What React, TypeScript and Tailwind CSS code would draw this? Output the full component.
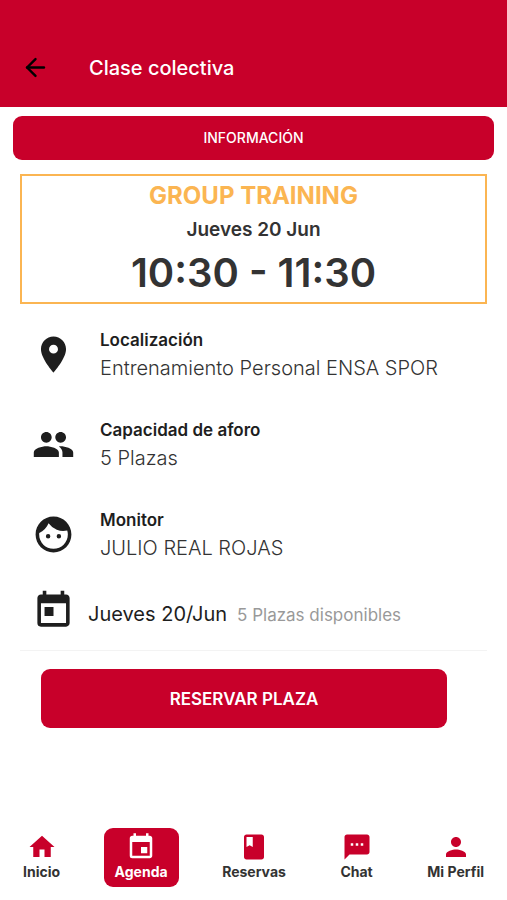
import { useState } from 'react'
import { FiArrowLeft } from 'react-icons/fi'
import {
  MdBook,
  MdEvent,
  MdFace,
  MdHome,
  MdPeople,
  MdPerson,
  MdPlace,
  MdTextsms,
  MdToday,
} from 'react-icons/md'

const DETAILS = [
  { label: 'Localización', value: 'Entrenamiento Personal ENSA SPOR', Icon: MdPlace },
  { label: 'Capacidad de aforo', value: '5 Plazas', Icon: MdPeople },
  { label: 'Monitor', value: 'JULIO REAL ROJAS', Icon: MdFace },
]

const TABS = [
  { label: 'Inicio', Icon: MdHome },
  { label: 'Agenda', Icon: MdEvent },
  { label: 'Reservas', Icon: MdBook },
  { label: 'Chat', Icon: MdTextsms },
  { label: 'Mi Perfil', Icon: MdPerson },
]

function Header() {
  return (
    <header className="flex items-center gap-[39px] bg-[#c8002a] pt-12 pr-5 pb-5 pl-[21px] text-white">
      <button aria-label="Volver" className="flex h-[39px] w-[29px] items-center justify-center text-black">
        <FiArrowLeft size={29} className="shrink-0" />
      </button>
      <h1 className="text-[20px] font-medium">Clase colectiva</h1>
    </header>
  )
}

function ClassCard() {
  return (
    <section className="mx-5 mt-[14px] flex h-[130px] flex-col items-center border-2 border-[#fbb552] pt-1 text-[#333]">
      <h2 className="text-[24px] leading-8 font-bold text-[#fbb552]">GROUP TRAINING</h2>
      <p className="text-[19px] leading-9 font-semibold">Jueves 20 Jun</p>
      <p className="text-[40px] leading-[50px] font-semibold">10:30 - 11:30</p>
    </section>
  )
}

export default function App() {
  const [active, setActive] = useState('Agenda')

  return (
    <div className="flex min-h-screen flex-col bg-white font-[Inter,sans-serif] text-[#1e1e1e]">
      <Header />

      <main>
        <div className="px-[13px] pt-[9px]">
          <button className="h-11 w-full rounded-[9px] bg-[#c8002a] pb-[2px] text-[14px] font-medium text-white">
            INFORMACIÓN
          </button>
        </div>

        <ClassCard />

        <dl className="mt-[22px] flex flex-col gap-[34px] px-8">
          {DETAILS.map(({ label, value, Icon }) => (
            <div key={label} className="grid grid-cols-[43px_1fr] items-center gap-x-[25px]">
              <Icon size={43} className="row-span-2" />
              <dt className="text-[17px] leading-7 font-semibold">{label}</dt>
              <dd className="text-[20px] leading-7 font-light text-[#333]">{value}</dd>
            </div>
          ))}
        </dl>

        <div className="mx-5 mt-[27px] flex items-center border-b border-[#f3f3f3] pb-[18px] pl-3">
          <MdToday size={43} className="shrink-0" />
          <div className="flex items-baseline gap-[10px] pt-[6px] pl-[13px]">
            <p className="text-[20px]">Jueves 20/Jun</p>
            <p className="text-[17px] text-[#999]">5 Plazas disponibles</p>
          </div>
        </div>

        <div className="mt-[18px] pr-[60px] pl-[41px]">
          <button className="h-[59px] w-full rounded-[9px] bg-[#c8002a] pt-[2px] text-[17px] font-semibold text-white">
            RESERVAR PLAZA
          </button>
        </div>
      </main>

      <nav className="mt-auto flex justify-between px-3 pb-[13px]">
        {TABS.map(({ label, Icon }) => (
          <button
            key={label}
            onClick={() => setActive(label)}
            className={
              active === label
                ? 'flex h-[59px] flex-col items-center rounded-[9px] bg-[#c8002a] px-[11px] pt-1 text-white'
                : 'flex h-[59px] flex-col items-center rounded-[9px] px-[11px] pt-1 text-[#c8002a]'
            }
          >
            <Icon size={30} />
            <span className={active === label ? 'text-[14px] leading-5 font-bold' : 'text-[14px] leading-5 font-bold text-[#333]'}>
              {label}
            </span>
          </button>
        ))}
      </nav>
    </div>
  )
}
